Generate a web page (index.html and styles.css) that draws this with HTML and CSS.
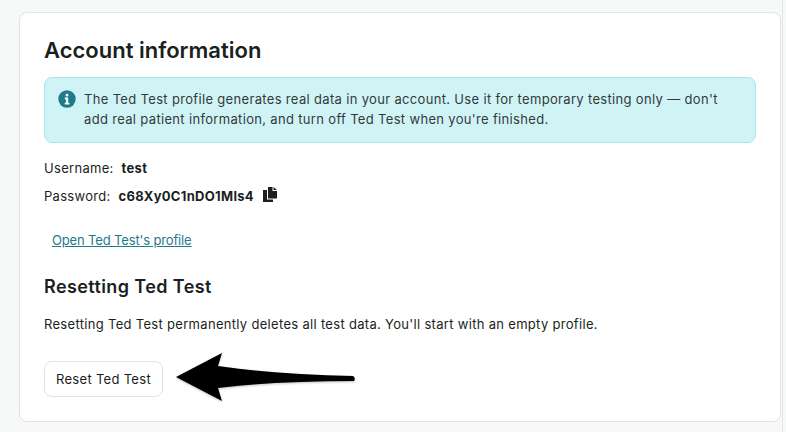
FILE: index.html
```html
<!DOCTYPE html>
<html lang="en">
<head>
    <meta charset="UTF-8">
    <meta name="viewport" content="width=device-width, initial-scale=1.0">
    <title>Account information</title>
    <link rel="stylesheet" href="styles.css">
</head>
<body>
    <div class="page">
        <div class="card">
            <h1 class="card-title">Account information</h1>

            <div class="notice">
                <svg class="notice-icon" viewBox="0 0 18 18" width="18" height="18">
                    <circle cx="9" cy="9" r="8.7" fill="#1f7a8c"/>
                    <circle cx="9" cy="5" r="1.5" fill="#fff"/>
                    <path d="M6.8 7.6h3.4v5.2h1.2v1.6H6.7v-1.6h1.2V9.2H6.8z" fill="#fff"/>
                </svg>
                <p class="notice-text">The Ted Test profile generates real data in your account. Use it for temporary testing only — don't add real patient information, and turn off Ted Test when you're finished.</p>
            </div>

            <div class="field">
                <span class="field-label">Username:</span>
                <span class="field-value">test</span>
            </div>
            <div class="field">
                <span class="field-label">Password:</span>
                <span class="field-value">c68Xy0C1nDO1Mls4</span>
                <svg class="copy-icon" viewBox="0 0 14 15" width="14" height="15">
                    <path d="M5 0h4.500v4H14v7.500H5z" fill="#1a1f22"/>
                    <path d="M10.500 0L14 3h-3.500z" fill="#1a1f22"/>
                    <path d="M0 3h4v9.500h6V15H0z" fill="#1a1f22"/>
                </svg>
            </div>

            <a class="profile-link" href="#">Open Ted Test's profile</a>

            <h2 class="section-title">Resetting Ted Test</h2>
            <p class="section-text">Resetting Ted Test permanently deletes all test data. You'll start with an empty profile.</p>

            <div class="actions">
                <button class="btn">Reset Ted Test</button>
                <svg class="arrow" viewBox="0 0 180 49" width="180" height="49">
                    <path d="M0 24L46 0 42 13C85 19 130 22 177 23Q180 25 178 28C130 28 85 30 42 35L46 48z" fill="#000"/>
                </svg>
            </div>
        </div>
    </div>
</body>
</html>
```

FILE: styles.css
```css
html, body {
    margin: 0;
    height: 100%;
}

body {
    font-family: 'Inter', 'Liberation Sans', sans-serif;
    background-color: #f7f9f8;
    color: #1a1f22;
    overflow: hidden;
}

.page {
    padding: 12px 1px 0 19px;
    border-right: 1px solid #e4e6e6;
    margin-right: 3px;
    height: 100%;
    box-sizing: border-box;
}

.card {
    background-color: #fff;
    border: 1px solid #dfe3e3;
    border-radius: 8px;
    height: 410px;
    box-sizing: border-box;
    padding: 23px 24px 0 24px;
}

.card-title {
    font-size: 22px;
    line-height: 28px;
    font-weight: 600;
    margin: 0 0 13px 0;
}

.notice {
    display: flex;
    gap: 8px;
    background-color: #d0f4f5;
    border: 1px solid #a3e8f0;
    border-radius: 8px;
    padding: 11px 30px 11px 13px;
    margin-bottom: 15px;
    height: 66px;
    box-sizing: border-box;
}

.notice-icon {
    flex-shrink: 0;
    margin-top: 1px;
}

.notice-text {
    margin: 0;
    font-size: 13px;
    line-height: 20px;
    letter-spacing: 0.33px;
    color: #33393c;
}

.field {
    display: flex;
    align-items: center;
    gap: 8px;
    font-size: 13px;
    line-height: 20px;
    letter-spacing: 0.3px;
    margin-bottom: 8px;
}

.field-value {
    font-weight: 700;
}

.copy-icon {
    margin-left: 1px;
    margin-top: -3px;
}

.profile-link {
    display: block;
    margin: 24px 0 0 8px;
    font-size: 13px;
    line-height: 20px;
    letter-spacing: -0.15px;
    color: #1f7a8c;
}

.section-title {
    font-size: 18px;
    line-height: 24px;
    font-weight: 600;
    letter-spacing: 0.4px;
    margin: 25px 0 15px 0;
}

.section-text {
    font-size: 13px;
    line-height: 20px;
    letter-spacing: 0.31px;
    margin: 0 0 27px 0;
}

.actions {
    display: flex;
    align-items: flex-start;
    gap: 13px;
}

.btn {
    background-color: #fff;
    border: 1px solid #dfe3e3;
    color: #1a1f22;
    border-radius: 8px;
    width: 119px;
    height: 36px;
    padding: 0;
    font-family: inherit;
    font-size: 13px;
    letter-spacing: 0.3px;
}

.arrow {
    flex-shrink: 0;
    margin-top: -8px;
    filter: drop-shadow(0 1px 1px rgba(0, 0, 0, 0.25));
}
```
